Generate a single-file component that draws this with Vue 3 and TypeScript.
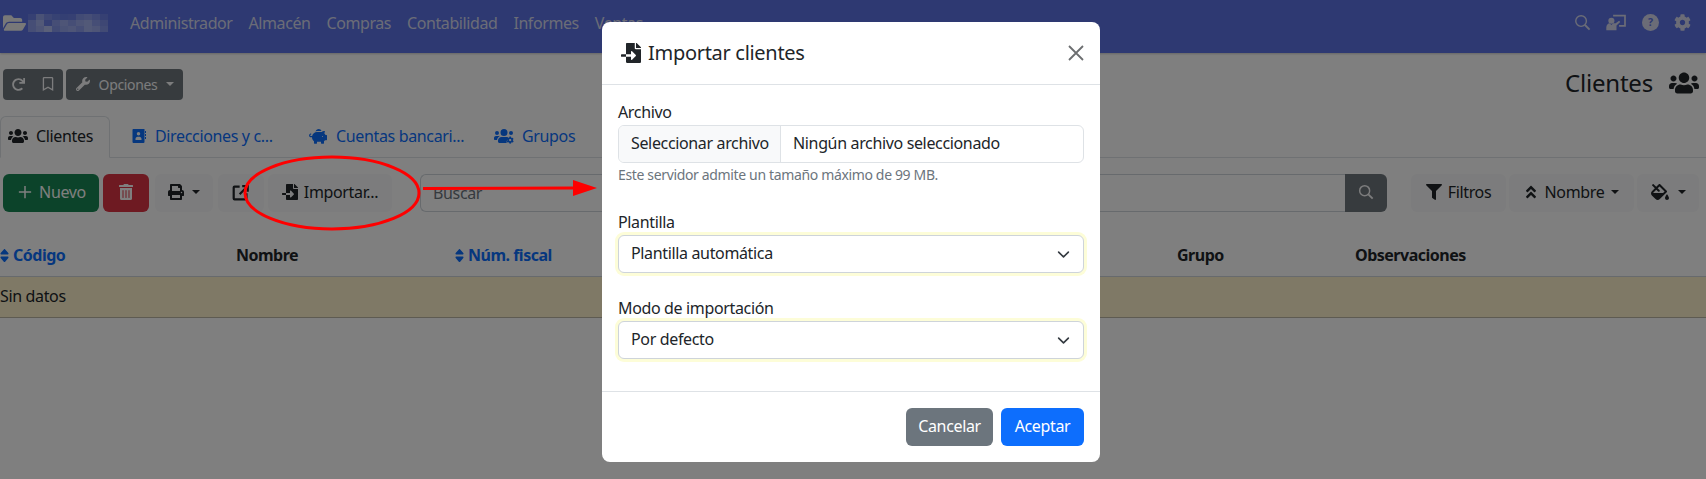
<template>
  <div class="page">
    <nav class="navbar">
      <svg class="brand-icon" viewBox="0 0 576 512"><path :d="icons.folderOpen" /></svg>
      <div class="brand-blur">
        <span v-for="(o, i) in blurCells" :key="i" :style="{ opacity: o }"></span>
      </div>
      <a v-for="item in menu" :key="item" class="nav-link">{{ item }}</a>
      <div class="nav-right">
        <svg class="nav-ic" viewBox="0 0 24 24"><circle cx="10" cy="10" r="7.5" fill="none" stroke="currentColor" stroke-width="2" /><path d="M15.5 15.5L22 22" stroke="currentColor" stroke-width="2.6" /></svg>
        <svg class="nav-ic wide" viewBox="0 0 24 20"><path d="M8 1h15v14h-8v-2h6V3H8z" /><circle cx="6" cy="8" r="3.6" /><path d="M0 19v-3c0-3 2-5 4-5l2 2 2-2h3l4-3 1.4 1.4L12 13.500V19z" /></svg>
        <svg class="nav-ic" viewBox="0 0 24 24"><circle cx="12" cy="12" r="12" /><text x="12" y="17.500" text-anchor="middle" class="q-mark">?</text></svg>
        <svg class="nav-ic" viewBox="0 0 512 512"><path :d="icons.cog" /></svg>
      </div>
    </nav>

    <div class="top-row">
      <div class="btn-pair">
        <button class="btn btn-dark sm">
          <svg class="ic redo" viewBox="0 0 512 512"><path :d="icons.redo" /></svg>
        </button>
        <button class="btn btn-dark sm">
          <svg class="ic" viewBox="0 0 384 512"><path :d="icons.bookmark" /></svg>
        </button>
      </div>
      <button class="btn btn-dark sm options">
        <svg class="ic" viewBox="0 0 512 512"><path :d="icons.wrench" /></svg>
        <span>Opciones</span>
        <i class="caret"></i>
      </button>
      <div class="page-title">
        <span>Clientes</span>
        <svg class="title-ic" viewBox="0 0 640 512"><path :d="icons.users" /></svg>
      </div>
    </div>

    <ul class="tabs">
      <li class="tab active" style="width: 110px">
        <svg class="tab-ic" viewBox="0 0 640 512"><path :d="icons.users" /></svg>
        <span>Clientes</span>
      </li>
      <li class="tab" style="width: 177px">
        <svg class="tab-ic book" viewBox="0 0 448 512"><path d="M400 32H48C22 32 16 50 16 64v384c0 20 12 32 32 32h304c26 0 48-8 48-32zM208 128a56 56 0 1 1 0 112 56 56 0 0 1 0-112zm-96 256v-32c0-40 30-72 64-72h64c34 0 64 32 64 72v32zM416 96h32v64h-32zm0 96h32v64h-32zm0 96h32v64h-32z" /></svg>
        <span>Direcciones y c...</span>
      </li>
      <li class="tab" style="width: 186px">
        <svg class="tab-ic" viewBox="0 0 576 512"><path d="M560 224h-30c-9-20-22-38-38-52l18-76h-32c-29 0-55 13-72 34-7-1-14-2-22-2H256c-78 0-143 56-157 130H64c-15 0-27-12-25-27 2-13 13-21 25-21h2c3 0 6-3 6-6v-20c0-3-3-6-6-6-30 0-58 20-63 50-6 38 24 70 61 70h32c0 52 26 98 64 127v65c0 9 7 16 16 16h64c9 0 16-7 16-16v-48h128v48c0 9 7 16 16 16h64c9 0 16-7 16-16v-65c12-9 23-20 32-32h48c9 0 16-7 16-16V240c0-9-7-16-16-16zm-128 64a16 16 0 1 1 0-32 16 16 0 0 1 0 32zM256 96h128c5 0 11 0 16 1-11-40-47-65-88-65-48 0-90 30-104 80 15-10 30-16 48-16z" /></svg>
        <span>Cuentas bancari...</span>
      </li>
      <li class="tab">
        <svg class="tab-ic" viewBox="0 0 640 512"><path d="M96 224a64 64 0 1 0 0-128 64 64 0 0 0 0 128zm448 0a64 64 0 1 0 0-128 64 64 0 0 0 0 128zM320 256a112 112 0 1 0 0-224 112 112 0 0 0 0 224zm-147-19C161 263 146 256 128 256H64c-35 0-64 29-64 64v32c0 18 14 32 32 32h66c6-47 35-87 75-109zM128 403c0-64 52-115 115-115h154c40 0 75 20 95 52-50 10-90 55-90 110 0 12 2 20 4 30H176c-26 0-48-22-48-48z" /><g transform="translate(400 270) scale(.46)"><path :d="icons.cog" /></g></svg>
        <span>Grupos</span>
      </li>
    </ul>

    <div class="toolbar">
      <button class="btn btn-success nuevo">
        <svg class="plus" viewBox="0 0 16 16"><path d="M8 1v14M1 8h14" fill="none" stroke="currentColor" stroke-width="1.7" /></svg>
        <span>Nuevo</span>
      </button>
      <button class="btn btn-danger del">
        <svg class="ic16" viewBox="0 0 448 512"><path :d="icons.trash" /></svg>
      </button>
      <button class="btn btn-light print">
        <svg class="ic16" viewBox="0 0 512 512"><path :d="icons.print" /></svg>
        <i class="caret dark"></i>
      </button>
      <button class="btn btn-light export">
        <svg class="ic-export" viewBox="0 0 20 20"><path d="M9 3H3a1 1 0 0 0-1 1v13a1 1 0 0 0 1 1h13a1 1 0 0 0 1-1v-6M9 12l9-9M12 2.500h6.500V9" fill="none" stroke="currentColor" stroke-width="2.600" /></svg>
      </button>
      <button class="btn btn-light importar">
        <svg class="ic16" viewBox="0 0 512 512"><path :d="icons.fileImport" /></svg>
        <span>Importar...</span>
      </button>
      <div class="search">
        <input type="text" placeholder="Buscar" />
        <button class="btn btn-dark search-btn">
          <svg class="ic16" viewBox="0 0 24 24"><circle cx="10" cy="10" r="7.500" fill="none" stroke="currentColor" stroke-width="2.200" /><path d="M15.500 15.500L22 22" stroke="currentColor" stroke-width="2.800" /></svg>
        </button>
      </div>
      <button class="btn btn-light filtros">
        <svg class="ic16" viewBox="0 0 512 512"><path :d="icons.filter" /></svg>
        <span>Filtros</span>
      </button>
      <button class="btn btn-light orden">
        <svg class="ic16 narrow" viewBox="0 0 320 512"><path :d="icons.angleDouble" /></svg>
        <span>Nombre</span>
        <i class="caret dark"></i>
      </button>
      <button class="btn btn-light paint">
        <svg class="ic16 fill" viewBox="0 0 576 512"><path :d="icons.fillDrip" /></svg>
        <i class="caret dark"></i>
      </button>
    </div>

    <table class="list">
      <colgroup>
        <col style="width: 236px" />
        <col style="width: 219px" />
        <col style="width: 722px" />
        <col style="width: 178px" />
        <col />
      </colgroup>
      <thead>
        <tr>
          <th class="sortable"><svg class="sort" viewBox="0 0 320 512" preserveAspectRatio="none"><path :d="icons.sort" /></svg>Código</th>
          <th>Nombre</th>
          <th class="sortable"><svg class="sort" viewBox="0 0 320 512" preserveAspectRatio="none"><path :d="icons.sort" /></svg>Núm. fiscal</th>
          <th>Grupo</th>
          <th>Observaciones</th>
        </tr>
      </thead>
      <tbody>
        <tr>
          <td colspan="5">Sin datos</td>
        </tr>
      </tbody>
    </table>

    <div class="backdrop"></div>

    <!-- anotaciones a mano sobre la captura -->
    <svg class="annotation" viewBox="0 0 1706 479">
      <ellipse cx="332" cy="193" rx="87" ry="36" fill="none" stroke="#fe0000" stroke-width="3" />
      <path d="M423 188.500L575 188" fill="none" stroke="#fe0000" stroke-width="3" />
      <path d="M573 180L597 188L573 196z" fill="#fe0000" />
    </svg>

    <div class="modal-wrap">
      <div class="modal">
        <div class="modal-header">
          <h5>
            <svg class="head-ic" viewBox="0 0 512 512"><path :d="icons.fileImport" /></svg>
            Importar clientes
          </h5>
          <svg class="close" viewBox="0 0 16 16"><path d="M1 1l14 14M15 1L1 15" fill="none" stroke="#6c6e70" stroke-width="1.800" /></svg>
        </div>
        <div class="modal-body">
          <div class="field">
            <label>Archivo</label>
            <div class="file-input">
              <span class="file-btn">Seleccionar archivo</span>
              <span class="file-name">Ningún archivo seleccionado</span>
            </div>
            <small>Este servidor admite un tamaño máximo de 99 MB.</small>
          </div>
          <div v-for="s in selects" :key="s.label" class="field">
            <label>{{ s.label }}</label>
            <div class="select">
              <span>{{ s.value }}</span>
              <svg class="chev" viewBox="0 0 16 16"><path d="M2 5l6 6 6-6" fill="none" stroke="#343a40" stroke-width="2" stroke-linecap="round" stroke-linejoin="round" /></svg>
            </div>
          </div>
        </div>
        <div class="modal-footer">
          <button class="btn btn-secondary cancelar">Cancelar</button>
          <button class="btn btn-primary aceptar">Aceptar</button>
        </div>
      </div>
    </div>
  </div>
</template>

<script setup lang="ts">
const menu: string[] = ['Administrador', 'Almacén', 'Compras', 'Contabilidad', 'Informes', 'Ventas']

// nombre de la empresa pixelado en la captura
const blurCells: number[] = [
  0.1, 0.35, 0.2, 0.12, 0.08, 0.1, 0.25, 0.3, 0.22, 0.1,
  0.3, 0.45, 0.1, 0.3, 0.4, 0.3, 0.4, 0.45, 0.3, 0.2,
  0.3, 0.4, 0.55, 0.25, 0.35, 0.4, 0.3, 0.45, 0.4, 0.25,
]

const selects = [
  { label: 'Plantilla', value: 'Plantilla automática' },
  { label: 'Modo de importación', value: 'Por defecto' },
]

const icons = {
  folderOpen: 'M572.694 292.093L500.27 416.248A63.997 63.997 0 0 1 444.989 448H45.025c-18.523 0-30.064-20.093-20.731-36.093l72.424-124.155A64 64 0 0 1 152 256h399.964c18.523 0 30.064 20.093 20.73 36.093zM152 224h328v-48c0-26.51-21.49-48-48-48H272l-64-64H48C21.49 64 0 85.49 0 112v278.046l69.077-118.418C86.214 242.25 118.13 224 152 224z',
  users: 'M96 224c35.3 0 64-28.7 64-64s-28.7-64-64-64-64 28.7-64 64 28.7 64 64 64zm448 0c35.3 0 64-28.7 64-64s-28.7-64-64-64-64 28.7-64 64 28.7 64 64 64zm32 32h-64c-17.6 0-33.5 7.1-45.1 18.6 40.3 22.1 68.9 62 75.1 109.4h66c17.7 0 32-14.3 32-32v-32c0-35.3-28.7-64-64-64zm-256 0c61.9 0 112-50.1 112-112S381.9 32 320 32 208 82.1 208 144s50.1 112 112 112zm76.8 32h-8.3c-20.8 10-43.9 16-68.5 16s-47.6-6-68.5-16h-8.3C179.6 288 128 339.6 128 403.2V432c0 26.5 21.5 48 48 48h288c26.5 0 48-21.5 48-48v-28.8c0-63.6-51.6-115.2-115.2-115.2zm-223.7-13.4C161.5 263.1 145.6 256 128 256H64c-35.3 0-64 28.7-64 64v32c0 17.7 14.3 32 32 32h65.9c6.3-47.4 34.9-87.3 75.2-109.4z',
  fileImport: 'M16 288c-8.8 0-16 7.2-16 16v32c0 8.8 7.2 16 16 16h112v-64zm489-183L407.1 7c-4.5-4.5-10.6-7-17-7H384v128h128v-6.1c0-6.3-2.5-12.4-7-16.9zm-153 31V0H152c-13.3 0-24 10.7-24 24v264h128v-65.2c0-14.3 17.3-21.4 27.4-11.3L379 308c6.6 6.7 6.6 17.4 0 24l-95.7 96.4c-10.1 10.1-27.4 3-27.4-11.3V352H128v136c0 13.3 10.7 24 24 24h336c13.3 0 24-10.7 24-24V160H376c-13.2 0-24-10.8-24-24z',
  cog: 'M487.4 315.7l-42.6-24.6c4.3-23.2 4.3-47 0-70.2l42.6-24.6c4.9-2.8 7.1-8.6 5.5-14-11.1-35.6-30-67.8-54.7-94.6-3.8-4.1-10-5.1-14.8-2.3L380.8 110c-17.9-15.4-38.5-27.3-60.8-35.1V25.8c0-5.6-3.9-10.5-9.4-11.7-36.7-8.2-74.3-7.8-109.2 0-5.5 1.2-9.4 6.1-9.4 11.7V75c-22.2 7.9-42.8 19.8-60.8 35.1L88.7 85.5c-4.9-2.8-11-1.9-14.8 2.3-24.7 26.7-43.6 58.9-54.7 94.6-1.7 5.4.6 11.2 5.5 14L67.3 221c-4.3 23.2-4.3 47 0 70.2l-42.6 24.6c-4.9 2.8-7.1 8.6-5.5 14 11.1 35.6 30 67.8 54.7 94.6 3.8 4.1 10 5.1 14.8 2.3l42.6-24.6c17.9 15.4 38.5 27.3 60.8 35.1v49.2c0 5.6 3.9 10.5 9.4 11.7 36.7 8.2 74.3 7.8 109.2 0 5.5-1.2 9.4-6.1 9.4-11.7v-49.2c22.2-7.9 42.8-19.8 60.8-35.1l42.6 24.6c4.9 2.8 11 1.9 14.8-2.3 24.7-26.7 43.6-58.9 54.7-94.6 1.5-5.5-.7-11.3-5.6-14.1zM256 336c-44.1 0-80-35.9-80-80s35.9-80 80-80 80 35.9 80 80-35.9 80-80 80z',
  filter: 'M487.976 0H24.028C2.71 0-8.047 25.866 7.058 40.971L192 225.941V432c0 7.831 3.821 15.17 10.237 19.662l80 55.98C298.02 518.69 320 507.493 320 487.98V225.941l184.947-184.97C520.021 25.896 509.338 0 487.976 0z',
  trash: 'M32 464a48 48 0 0 0 48 48h288a48 48 0 0 0 48-48V128H32zm272-256a16 16 0 0 1 32 0v224a16 16 0 0 1-32 0zm-96 0a16 16 0 0 1 32 0v224a16 16 0 0 1-32 0zm-96 0a16 16 0 0 1 32 0v224a16 16 0 0 1-32 0zM432 32H312l-9.4-18.7A24 24 0 0 0 281.1 0H166.8a23.72 23.72 0 0 0-21.4 13.3L136 32H16A16 16 0 0 0 0 48v32a16 16 0 0 0 16 16h416a16 16 0 0 0 16-16V48a16 16 0 0 0-16-16z',
  print: 'M448 192V77.25c0-8.49-3.37-16.62-9.37-22.63L393.37 9.37c-6-6-14.14-9.37-22.63-9.37H96C78.33 0 64 14.33 64 32v160c-35.35 0-64 28.65-64 64v112c0 8.84 7.16 16 16 16h48v96c0 17.67 14.33 32 32 32h320c17.67 0 32-14.33 32-32v-96h48c8.84 0 16-7.16 16-16V256c0-35.35-28.65-64-64-64zm-64 256H128v-96h256v96zm0-224H128V64h192v48c0 8.84 7.16 16 16 16h48v96zm48 72c-13.25 0-24-10.75-24-24 0-13.26 10.75-24 24-24s24 10.74 24 24c0 13.25-10.75 24-24 24z',
  wrench: 'M507.73 109.1c-2.24-9.03-13.54-12.09-20.12-5.51l-74.36 74.36-67.88-11.31-11.31-67.88 74.36-74.36c6.62-6.62 3.43-17.9-5.66-20.16-47.38-11.74-99.55.91-136.58 37.93-39.64 39.64-50.55 97.1-34.05 147.2L18.74 402.76c-24.99 24.99-24.99 65.51 0 90.5 24.99 24.99 65.51 24.99 90.5 0l213.21-213.21c50.12 16.71 107.47 5.68 147.37-34.22 37.07-37.07 49.7-89.32 37.91-136.73zM64 472c-13.25 0-24-10.75-24-24 0-13.26 10.75-24 24-24s24 10.74 24 24c0 13.25-10.75 24-24 24z',
  sort: 'M41 288h238c21.4 0 32.1 25.9 17 41L177 448c-9.4 9.4-24.6 9.4-33.9 0L24 329c-15.1-15.1-4.4-41 17-41zm255-105L177 64c-9.4-9.4-24.6-9.4-33.9 0L24 183c-15.1 15.1-4.4 41 17 41h238c21.4 0 32.1-25.9 17-41z',
  angleDouble: 'M177 255.7l136 136c9.4 9.4 9.4 24.6 0 33.9l-22.6 22.6c-9.4 9.4-24.6 9.4-33.9 0L160 351.9l-96.4 96.4c-9.4 9.4-24.6 9.4-33.9 0L7 425.7c-9.4-9.4-9.4-24.6 0-33.9l136-136c9.4-9.5 24.6-9.5 34-.1zm-34-192L7 199.7c-9.4 9.4-9.4 24.6 0 33.9l22.6 22.6c9.4 9.4 24.6 9.4 33.9 0l96.4-96.4 96.4 96.4c9.4 9.4 24.6 9.4 33.9 0l22.6-22.6c9.4-9.4 9.4-24.6 0-33.9l-136-136c-9.2-9.4-24.4-9.4-33.8 0z',
  fillDrip: 'M512 320s-64 92.65-64 128c0 35.35 28.66 64 64 64s64-28.65 64-64-64-128-64-128zm-9.37-102.94L294.94 9.37C288.69 3.12 280.5 0 272.31 0s-16.38 3.12-22.62 9.37l-81.58 81.58L81.93 4.76c-6.25-6.25-16.38-6.25-22.62 0L36.69 27.38c-6.24 6.25-6.24 16.38 0 22.62l86.19 86.18-94.76 94.76c-37.49 37.48-37.49 98.26 0 135.75l117.19 117.19c18.74 18.74 43.31 28.12 67.87 28.12 24.57 0 49.13-9.37 67.87-28.12l221.57-221.57c12.5-12.5 12.5-32.75.01-45.25zm-116.22 70.97H65.93c1.36-3.84 3.57-7.98 7.43-11.83l13.15-13.15 81.61-81.61 58.6 58.6c12.49 12.49 32.75 12.49 45.24 0s12.49-32.75 0-45.24l-58.6-58.6 58.95-58.95 162.44 162.44-48.34 48.34z',
  bookmark: 'M336 0H48C21.49 0 0 21.49 0 48v464l192-112 192 112V48c0-26.51-21.49-48-48-48zm0 428.43l-144-84-144 84V54a6 6 0 0 1 6-6h276c3.314 0 6 2.683 6 5.996V428.43z',
  redo: 'M500.33 0h-47.41a12 12 0 0 0-12 12.57l4 82.76A247.42 247.42 0 0 0 256 8C119.34 8 7.9 119.53 8 256.19 8.1 393.07 119.1 504 256 504a247.1 247.1 0 0 0 166.18-63.91 12 12 0 0 0 .48-17.43l-34-34a12 12 0 0 0-16.38-.55A176 176 0 1 1 402.1 157.8l-101.53-4.87a12 12 0 0 0-12.57 12v47.41a12 12 0 0 0 12 12h200.33a12 12 0 0 0 12-12V12a12 12 0 0 0-12-12z',
}
</script>

<style>
html,
body {
  margin: 0;
  background: #fff;
  overflow: hidden;
}
</style>

<style scoped>
.page {
  position: relative;
  width: 1706px;
  height: 479px;
  overflow: hidden;
  font-family: "Noto Sans", "Liberation Sans", sans-serif;
  font-size: 16px;
  letter-spacing: -0.35px;
  color: #212529;
  background: #fff;
}

svg {
  fill: currentColor;
  flex: none;
}

.navbar {
  display: flex;
  align-items: center;
  height: 53px;
  padding: 0 0 8px 3px;
  box-sizing: border-box;
  background: #5c73e4;
  box-shadow: 0 1px 2px rgba(0, 0, 0, 0.2);
  color: #d6d9ee;
}

.brand-icon {
  width: 23px;
  height: 22px;
  color: #f0f0f0;
}

.brand-blur {
  display: grid;
  grid-template-columns: repeat(10, 8px);
  grid-auto-rows: 6px;
  margin: 0 14px 0 2px;
}

.brand-blur span {
  background: #fff;
}

.nav-link {
  padding: 0 8px;
  white-space: nowrap;
  letter-spacing: -0.42px;
}

.nav-right {
  display: flex;
  align-items: center;
  gap: 15px;
  margin-left: auto;
  margin-right: 15px;
}

.nav-ic {
  width: 17px;
  height: 17px;
}

.nav-ic.wide {
  width: 21px;
}

.q-mark {
  font-size: 15px;
  font-weight: 700;
  fill: #5c73e4;
}

.btn {
  display: inline-flex;
  align-items: center;
  justify-content: center;
  gap: 6px;
  border: 1px solid transparent;
  border-radius: 6px;
  font: inherit;
  letter-spacing: inherit;
  height: 38px;
  padding: 0 0 2px;
  box-sizing: border-box;
  background: none;
  color: inherit;
}

.btn.sm {
  height: 31px;
  border-radius: 4px;
  font-size: 14px;
  padding-bottom: 1px;
}

.btn-dark {
  background: #6f767c;
  color: #f8f9fa;
}

.btn-success {
  background: #198754;
  color: #fff;
}

.btn-danger {
  background: #dc3545;
  color: #fff;
}

.btn-light {
  background: #f8f9fa;
  color: #212529;
}

.btn-secondary {
  background: #6c757d;
  color: #fff;
}

.btn-primary {
  background: #0d6efd;
  color: #fff;
}

.top-row {
  display: flex;
  align-items: center;
  height: 31px;
  margin-top: 16px;
  padding-left: 3px;
}

.btn-pair {
  display: flex;
  width: 60px;
  margin-right: 3px;
}

.btn-pair .btn {
  flex: 1;
}

.btn-pair .btn:first-child {
  border-radius: 4px 0 0 4px;
}

.btn-pair .btn:last-child {
  border-radius: 0 4px 4px 0;
}

.ic {
  width: 14px;
  height: 14px;
}

.ic.redo {
  width: 13px;
  height: 13px;
}

.options {
  width: 117px;
  gap: 9px;
  padding-left: 1px;
}

.caret {
  width: 0;
  height: 0;
  border-top: 4.800px solid currentColor;
  border-left: 4.800px solid transparent;
  border-right: 4.800px solid transparent;
}

.page-title {
  display: flex;
  align-items: center;
  gap: 16px;
  margin: 0 7px 4px auto;
  font-size: 24px;
  line-height: 29px;
  letter-spacing: -0.2px;
}

.title-ic {
  width: 30px;
  height: 24px;
}

.tabs {
  display: flex;
  list-style: none;
  margin: 16px 0 0;
  padding: 0;
  height: 41px;
  border-bottom: 1px solid #dee2e6;
}

.tab {
  display: flex;
  align-items: center;
  gap: 8px;
  box-sizing: border-box;
  height: 42px;
  padding: 0 0 3px 20px;
  color: #0d6efd;
  border: 1px solid transparent;
}

.tab.active {
  padding-left: 7px;
  color: #212529;
  background: #fff;
  border-color: #dee2e6 #dee2e6 #fff;
  border-radius: 6px 6px 0 0;
}

.tab-ic {
  width: 20px;
  height: 16px;
}

.tab-ic.book {
  width: 16px;
}

.toolbar {
  display: flex;
  align-items: center;
  margin-top: 16px;
  padding-left: 3px;
  height: 38px;
}

.ic16 {
  width: 16px;
  height: 16px;
}

.ic-export {
  width: 17px;
  height: 17px;
  margin-left: -1px;
}

.ic16.narrow {
  width: 14px;
}

.ic16.fill {
  width: 18px;
}

.plus {
  width: 14px;
  height: 14px;
}

.nuevo {
  width: 96px;
  margin-right: 4px;
  gap: 7px;
  padding-left: 2px;
}

.del {
  width: 46px;
  margin-right: 6px;
}

.print {
  width: 58px;
  margin-right: 5px;
  gap: 8px;
}

.export {
  width: 46px;
  margin-right: 4px;
}

.importar {
  width: 124px;
  margin-right: 28px;
}

.search {
  display: flex;
  width: 967px;
  margin-right: 24px;
}

.search input {
  flex: 1;
  min-width: 0;
  height: 38px;
  box-sizing: border-box;
  padding: 0 12px;
  border: 1px solid #ced4da;
  border-right: 0;
  border-radius: 6px 0 0 6px;
  font: inherit;
  letter-spacing: inherit;
  outline: none;
  background: #fff;
  color: #212529;
}

.search input::placeholder {
  color: #6c757d;
  opacity: 1;
}

.search-btn {
  width: 42px;
  border-radius: 0 6px 6px 0;
}

.filtros {
  width: 95px;
  margin-right: 3px;
}

.orden {
  width: 125px;
  margin-right: 3px;
  gap: 7px;
}

.paint {
  width: 62px;
  gap: 9px;
}

.list {
  width: 100%;
  margin-top: 21px;
  table-layout: fixed;
  border-collapse: collapse;
}

.list th {
  height: 43px;
  padding: 2px 0 0;
  text-align: left;
  font-weight: 700;
  letter-spacing: -0.5px;
  border-bottom: 1px solid #ced4da;
  box-sizing: border-box;
}

.list th.sortable {
  color: #0d6efd;
}

.sort {
  width: 9px;
  height: 17px;
  margin-right: 4px;
  vertical-align: -3px;
}

.list td {
  height: 41px;
  padding: 0 0 2px;
  background: #fff3cd;
  border-bottom: 1px solid #bdb7a4;
  box-sizing: border-box;
}

.backdrop {
  position: absolute;
  inset: 0;
  background: rgba(0, 0, 0, 0.5);
}

.annotation {
  position: absolute;
  inset: 0;
  width: 1706px;
  height: 479px;
  pointer-events: none;
}

.modal-wrap {
  position: absolute;
  inset: 0;
  padding: 22px 4px 0 0;
  display: flex;
  justify-content: center;
  align-items: flex-start;
}

.modal {
  width: 498px;
  height: 440px;
  background: #fff;
  border-radius: 8px;
  box-sizing: border-box;
  display: flex;
  flex-direction: column;
}

.modal-header {
  display: flex;
  align-items: center;
  justify-content: space-between;
  height: 63px;
  flex: none;
  padding: 0 16px;
  box-sizing: border-box;
  border-bottom: 1px solid #dee2e6;
}

.modal-header h5 {
  display: flex;
  align-items: center;
  gap: 7px;
  margin: 0 0 0 3px;
  font-size: 20px;
  font-weight: 400;
  line-height: 24px;
  letter-spacing: -0.3px;
}

.head-ic {
  width: 20px;
  height: 20px;
}

.close {
  width: 16px;
  height: 16px;
  color: #6c6e70;
}

.modal-body {
  flex: 1;
  min-height: 0;
  padding: 16px;
}

.field {
  margin-bottom: 24px;
}

.field:last-child {
  margin-bottom: 0;
}

.field label {
  display: block;
  height: 24px;
  line-height: 22px;
}

.file-input {
  display: flex;
  height: 38px;
  box-sizing: border-box;
  border: 1px solid #dee2e6;
  border-radius: 6px;
  overflow: hidden;
  line-height: 34px;
}

.file-btn {
  width: 162px;
  padding-left: 12px;
  box-sizing: border-box;
  background: #f8f9fa;
  border-right: 1px solid #dee2e6;
}

.file-name {
  padding-left: 12px;
}

.field small {
  display: block;
  margin-top: 1px;
  padding-bottom: 2px;
  font-size: 14px;
  line-height: 21px;
  color: #6c757d;
}

.select {
  display: flex;
  align-items: center;
  justify-content: space-between;
  height: 38px;
  padding: 0 12px 0;
  box-sizing: border-box;
  border: 1px solid #ced4da;
  border-radius: 6px;
  background: #fff;
  box-shadow: 0 0 0 3px #fdfdd8;
}

.select span {
  margin-top: -2px;
}

.chev {
  width: 13px;
  height: 13px;
  margin-right: 1px;
}

.modal-footer {
  display: flex;
  justify-content: flex-end;
  gap: 8px;
  flex: none;
  height: 71px;
  padding: 16px 16px 0;
  box-sizing: border-box;
  border-top: 1px solid #dee2e6;
}

.cancelar {
  width: 87px;
}

.aceptar {
  width: 83px;
}
</style>
